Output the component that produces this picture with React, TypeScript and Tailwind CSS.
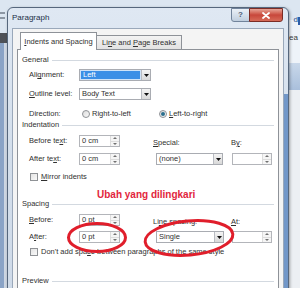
import React from "react";

const txt = "text-[7.5px] leading-none text-[#303030] whitespace-nowrap";

function U({ children }: { children: React.ReactNode }) {
  return <span className="underline underline-offset-[1px] decoration-[0.5px]">{children}</span>;
}

function Arrow() {
  return (
    <svg width="5" height="3" viewBox="0 0 5 3">
      <path d="M0 0H5L2.5 3Z" fill="#111" />
    </svg>
  );
}

function Select({ text, w, active }: { text: string; w: string; active?: boolean }) {
  return (
    <div className={`flex h-[12px] border border-[#a9acb2] bg-white ${w}`}>
      <div
        className={`flex flex-1 items-center pl-[2px] text-[7.5px] leading-none whitespace-nowrap ${
          active ? "bg-[#3b8fe6] text-white border border-[#cfe3f8]" : "text-[#303030]"
        }`}
      >
        {text}
      </div>
      <div className="flex w-[9px] items-center justify-center border-l border-[#b9bcc2] bg-gradient-to-b from-[#f4f4f4] to-[#d9d9d9]">
        <Arrow />
      </div>
    </div>
  );
}

function Spin({ text, w }: { text: string; w: string }) {
  return (
    <div className={`flex h-[12px] border border-[#b3b5ba] bg-white ${w}`}>
      <div className="flex flex-1 items-center pl-[2px] text-[7.5px] leading-none text-[#303030] whitespace-nowrap">
        {text}
      </div>
      <div className="flex w-[9px] flex-col border-l border-[#dcdcdc] bg-[#f5f5f5]">
        <div className="flex flex-1 items-center justify-center border-b border-[#dcdcdc]">
          <svg width="4" height="2" viewBox="0 0 4 2">
            <path d="M0 2H4L2 0Z" fill="#707070" />
          </svg>
        </div>
        <div className="flex flex-1 items-center justify-center">
          <svg width="4" height="2" viewBox="0 0 4 2">
            <path d="M0 0H4L2 2Z" fill="#707070" />
          </svg>
        </div>
      </div>
    </div>
  );
}

function Heading({ label, mt }: { label: string; mt: string }) {
  return (
    <div className={`flex h-[10px] items-center pl-[4px] pr-[4px] ${mt}`}>
      <span className={txt}>{label}</span>
      <div className="ml-[3px] h-px flex-1 bg-[#d3d9e0]" />
    </div>
  );
}

function Check() {
  return <div className="h-[8px] w-[8px] border border-[#8f9296] bg-gradient-to-br from-[#e4e4e4] to-[#fafafa]" />;
}

function Radio({ on }: { on?: boolean }) {
  return (
    <div className="flex h-[8px] w-[8px] items-center justify-center rounded-full border border-[#8f9296] bg-gradient-to-br from-[#dcdcdc] to-[#fafafa]">
      {on && <div className="h-[4px] w-[4px] rounded-full bg-[#2c6f8e]" />}
    </div>
  );
}

export default function App() {
  return (
    <div className="relative h-[288px] w-[300px] overflow-hidden bg-[#dce6f1] font-['Liberation_Sans',Arial,sans-serif]">
      {/* background application bits */}
      <div className="absolute left-0 top-[12px] h-[2px] w-[5px] bg-[#8c96a3]" />
      <div className="absolute left-0 top-[17px] h-[2px] w-[5px] bg-[#8c96a3]" />
      <div className="absolute left-0 top-[33px] h-[10px] w-[8px] bg-[#4e5157]" />
      <div className="absolute bottom-0 left-0 top-[43px] w-[4px] bg-[#8aa3c6]" />
      <div className="absolute bottom-0 left-[4px] top-[43px] w-[4px] bg-[#cdd6e2]" />

      <div className="absolute right-0 top-[20px] h-[43px] w-[12px] bg-[#eef3f9]" />
      <div className="absolute right-[2px] top-[16px] text-[8px] leading-none text-[#234a8a]">d</div>
      <div className="absolute right-0 top-[17px] h-[8px] w-[2px] bg-[#2f5ea8]" />
      <div className="absolute left-[289px] top-[34px] text-[8px] leading-none text-[#3a3a3a]">ea</div>
      <div className="absolute right-0 top-[63px] h-[27px] w-[12px] bg-gradient-to-b from-[#c9d8ea] to-[#a9bfdc]" />
      <div className="absolute bottom-0 right-0 top-[90px] w-[12px] bg-[#eceff3]" />

      {/* dialog window */}
      <div className="absolute left-[7px] top-[7px] h-[300px] w-[282px] rounded-t-[6px] border border-[#56677d] bg-gradient-to-b from-[#dfe8f3] via-[#d3deeb] to-[#cfdae8] shadow-[1px_1px_3px_rgba(0,0,0,0.35)]">
        <div className="absolute bottom-0 right-0 top-[86px] w-[4px] bg-[#7297c8]" />
        {/* title bar */}
        <div className="flex h-[20px] items-start">
          <div className="flex h-[20px] flex-1 items-center pl-[4px] text-[8px] leading-none text-[#1b2f48]">
            Paragraph
          </div>
          <div className="mr-[5px] flex">
            <div className="flex h-[14px] w-[19px] items-center justify-center rounded-bl-[3px] border border-[#71839b] bg-gradient-to-b from-[#eaf0f7] to-[#c0cede] text-[8px] font-bold leading-none text-[#4b5c73]">
              ?
            </div>
            <div className="-ml-px flex h-[14px] w-[34px] items-center justify-center rounded-br-[3px] border border-[#7b2c25] bg-gradient-to-b from-[#e6a497] via-[#c8473b] to-[#d66a58]">
              <svg width="8" height="7" viewBox="0 0 8 7">
                <path d="M1 1L7 6M7 1L1 6" stroke="#fff" strokeWidth="1.8" strokeLinecap="round" />
              </svg>
            </div>
          </div>
        </div>

        {/* client area */}
        <div className="mx-[4px] h-[300px] border border-[#9aa8ba] bg-[#f4f4f4] px-[4px] pt-[3px]">
          {/* tabs */}
          <div className="flex h-[17px] items-end pl-[3px]">
            <div className="relative z-10 -mb-px flex h-[18px] w-[77px] items-center justify-center border border-b-0 border-[#8e9298] bg-white">
              <span className={txt}>
                <U>I</U>ndents and Spacing
              </span>
            </div>
            <div className="flex h-[14px] w-[85px] items-center justify-center border border-b-0 border-l-0 border-[#8e9298] bg-gradient-to-b from-[#f3f3f3] to-[#e2e2e2]">
              <span className={txt}>
                Li<U>n</U>e and <U>P</U>age Breaks
              </span>
            </div>
          </div>

          {/* tab panel */}
          <div className="h-[260px] border border-[#8e9298] bg-white">
            <Heading label="General" mt="mt-[5px]" />

            <div className="mt-[4px] flex h-[12px] items-center pl-[11px]">
              <span className={`${txt} w-[50px]`}>
                Ali<U>g</U>nment:
              </span>
              <Select text="Left" w="w-[72px]" active />
            </div>

            <div className="mt-[7px] flex h-[12px] items-center pl-[11px]">
              <span className={`${txt} w-[50px]`}>
                <U>O</U>utline level:
              </span>
              <Select text="Body Text" w="w-[72px]" />
            </div>

            <div className="mt-[8px] flex h-[12px] items-center pl-[11px]">
              <span className={`${txt} w-[50px]`}>Direction:</span>
              <div className="flex w-[80px] items-center gap-[2px] pl-[3px]">
                <Radio />
                <span className={txt}>Right-to-left</span>
              </div>
              <div className="flex items-center gap-[2px]">
                <Radio on />
                <span className={txt}>
                  <U>L</U>eft-to-right
                </span>
              </div>
            </div>

            <Heading label="Indentation" mt="mt-0" />

            <div className="mt-[5px] flex h-[12px] items-center pl-[11px]">
              <span className={`${txt} w-[50px]`}>
                Before te<U>x</U>t:
              </span>
              <Spin text="0 cm" w="w-[41px]" />
              <div className="w-[33px]" />
              <span className={`${txt} w-[78px] self-start pt-[4px]`}>
                <U>S</U>pecial:
              </span>
              <span className={`${txt} self-start pt-[4px]`}>
                B<U>y</U>:
              </span>
            </div>

            <div className="mt-[6px] flex h-[12px] items-center pl-[11px]">
              <span className={`${txt} w-[50px]`}>
                After te<U>x</U>t:
              </span>
              <Spin text="0 cm" w="w-[41px]" />
              <div className="w-[36px]" />
              <Select text="(none)" w="w-[67px]" />
              <div className="w-[9px]" />
              <Spin text="" w="w-[40px]" />
            </div>

            <div className="mt-[6px] flex h-[12px] items-center pl-[12px]">
              <Check />
              <span className={`${txt} ml-[3px]`}>
                <U>M</U>irror indents
              </span>
            </div>

            <Heading label="Spacing" mt="mt-[16px]" />

            <div className="mt-[5px] flex h-[12px] items-center pl-[11px]">
              <span className={`${txt} w-[50px]`}>
                <U>B</U>efore:
              </span>
              <Spin text="0 pt" w="w-[41px]" />
              <div className="w-[33px]" />
              <span className={`${txt} w-[78px] self-start pt-[4px]`}>
                Li<U>n</U>e spacing:
              </span>
              <span className={`${txt} self-start pt-[4px]`}>
                <U>A</U>t:
              </span>
            </div>

            <div className="mt-[5px] flex h-[12px] items-center pl-[11px]">
              <span className={`${txt} w-[50px]`}>
                A<U>f</U>ter:
              </span>
              <Spin text="0 pt" w="w-[41px]" />
              <div className="w-[36px]" />
              <Select text="Single" w="w-[68px]" />
              <div className="w-[8px]" />
              <Spin text="" w="w-[40px]" />
            </div>

            <div className="mt-[3px] flex h-[12px] items-center pl-[12px]">
              <Check />
              <span className={`${txt} ml-[3px]`}>
                Don't add spa<U>c</U>e between paragraphs of the same style
              </span>
            </div>

            <Heading label="Preview" mt="mt-[18px]" />
          </div>
        </div>
      </div>

      {/* annotation */}
      <div className="absolute left-[97px] top-[190px] whitespace-nowrap text-[10px] font-bold leading-none text-[#e2253c]">
        Ubah yang dilingkari
      </div>
      <svg className="pointer-events-none absolute left-0 top-0" width="300" height="288" viewBox="0 0 300 288">
        <ellipse cx="97" cy="237.5" rx="28.5" ry="14" fill="none" stroke="#e01e2b" strokeWidth="3" />
        <ellipse
          cx="189"
          cy="238"
          rx="44"
          ry="17"
          fill="none"
          stroke="#e01e2b"
          strokeWidth="3"
          transform="rotate(-5 189 238)"
        />
      </svg>
    </div>
  );
}
